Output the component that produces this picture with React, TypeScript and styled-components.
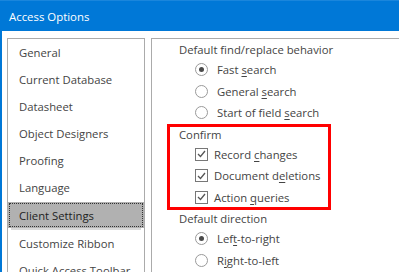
import React from "react";
import styled, { createGlobalStyle } from "styled-components";

const GlobalStyle = createGlobalStyle`
  html, body {
    margin: 0;
    padding: 0;
    background: #ffffff;
  }
  body {
    width: 399px;
    height: 272px;
    overflow: hidden;
    font-family: "Open Sans", "Noto Sans", sans-serif;
    font-size: 11.3px;
    color: #444444;
  }
`;

const Window = styled.div`
  display: flex;
  flex-direction: column;
  width: 399px;
  height: 272px;
  overflow: hidden;
`;

const TitleBar = styled.div`
  height: 31px;
  flex: none;
  display: flex;
  align-items: center;
  padding-left: 9px;
  background: #0078d7;
  border-top: 1px solid #1a86dc;
  box-sizing: border-box;
  color: #ffffff;
  font-size: 11.4px;
`;

const Body = styled.div`
  flex: 1;
  display: flex;
  align-items: stretch;
  gap: 6px;
  padding-top: 7px;
  padding-left: 5px;
  border-left: 2px solid #0078d7;
  min-height: 0;
`;

const Nav = styled.ul`
  list-style: none;
  margin: 0;
  padding: 0;
  width: 138px;
  flex: none;
  box-sizing: border-box;
  border: 1px solid #ababab;
  border-bottom: none;
  overflow: hidden;
`;

const NavItem = styled.li<{ $selected?: boolean }>`
  height: 27px;
  display: flex;
  align-items: center;
  padding-left: 11px;
  white-space: nowrap;
  ${(p) =>
    p.$selected &&
    `
    height: 26px;
    margin-top: 1px;
    margin-bottom: 2px;
    background: #b1b1b1;
    color: #222222;
    outline: 1px dotted #333333;
    outline-offset: -2px;
    box-shadow: 0 5px 0 -3px #d9d9d9;
  `}
`;

const Panel = styled.div`
  flex: 1;
  box-sizing: border-box;
  border: 1px solid #ababab;
  border-right: none;
  border-bottom: none;
  padding-top: 2px;
  overflow: hidden;
`;

const Section = styled.div<{ $highlight?: boolean }>`
  margin-left: 17px;
  padding-left: 10px;
  width: 160px;
  box-sizing: border-box;
  & + & {
    margin-top: 2px;
  }
  ${(p) =>
    p.$highlight &&
    `
    outline: 3px solid #ff0000;
    outline-offset: -1.5px;
  `}
`;

const Heading = styled.div`
  height: 18px;
  line-height: 18px;
  white-space: nowrap;
`;

const Option = styled.div`
  height: 21.5px;
  display: flex;
  align-items: center;
  padding-left: 16px;
  white-space: nowrap;
`;

const Radio = styled.span<{ $checked?: boolean }>`
  width: 13px;
  height: 13px;
  box-sizing: border-box;
  border: 1px solid #9a9a9a;
  border-radius: 50%;
  margin-right: 9px;
  display: flex;
  align-items: center;
  justify-content: center;
  flex: none;
  &::after {
    content: "";
    width: 5px;
    height: 5px;
    border-radius: 50%;
    background: ${(p) => (p.$checked ? "#4a4a4a" : "transparent")};
  }
`;

const Box = styled.span`
  width: 13px;
  height: 13px;
  box-sizing: border-box;
  border: 1px solid #777777;
  margin-right: 6px;
  display: flex;
  align-items: center;
  justify-content: center;
  flex: none;
`;

const Label = styled.span`
  white-space: pre;
`;

const Key = styled.span`
  text-decoration: underline;
  text-underline-offset: 2px;
`;

function Check() {
  return (
    <Box>
      <svg width="9" height="8" viewBox="0 0 9 8">
        <path d="M1 4 L3.5 6.5 L8 1" fill="none" stroke="#555" strokeWidth="1.3" />
      </svg>
    </Box>
  );
}

const navItems = [
  "General",
  "Current Database",
  "Datasheet",
  "Object Designers",
  "Proofing",
  "Language",
  "Client Settings",
  "Customize Ribbon",
  "Quick Access Toolbar",
];

export default function App() {
  return (
    <>
      <GlobalStyle />
      <Window>
        <TitleBar>Access Options</TitleBar>
        <Body>
          <Nav>
            {navItems.map((item) => (
              <NavItem key={item} $selected={item === "Client Settings"}>
                {item}
              </NavItem>
            ))}
          </Nav>
          <Panel>
            <Section>
              <Heading>Default find/replace behavior</Heading>
              <Option>
                <Radio $checked />
                <Label>
                  Fast <Key>s</Key>earch
                </Label>
              </Option>
              <Option>
                <Radio />
                <Label>
                  General <Key>s</Key>earch
                </Label>
              </Option>
              <Option>
                <Radio />
                <Label>
                  Start of field <Key>s</Key>earch
                </Label>
              </Option>
            </Section>
            <Section $highlight>
              <Heading>Confirm</Heading>
              <Option>
                <Check />
                <Label>
                  Record <Key>c</Key>hanges
                </Label>
              </Option>
              <Option>
                <Check />
                <Label>
                  Document d<Key>e</Key>letions
                </Label>
              </Option>
              <Option>
                <Check />
                <Label>
                  Action <Key>q</Key>ueries
                </Label>
              </Option>
            </Section>
            <Section>
              <Heading>Default direction</Heading>
              <Option>
                <Radio $checked />
                <Label>
                  Lef<Key>t</Key>-to-right
                </Label>
              </Option>
              <Option>
                <Radio />
                <Label>
                  R<Key>i</Key>ght-to-left
                </Label>
              </Option>
            </Section>
          </Panel>
        </Body>
      </Window>
    </>
  );
}
